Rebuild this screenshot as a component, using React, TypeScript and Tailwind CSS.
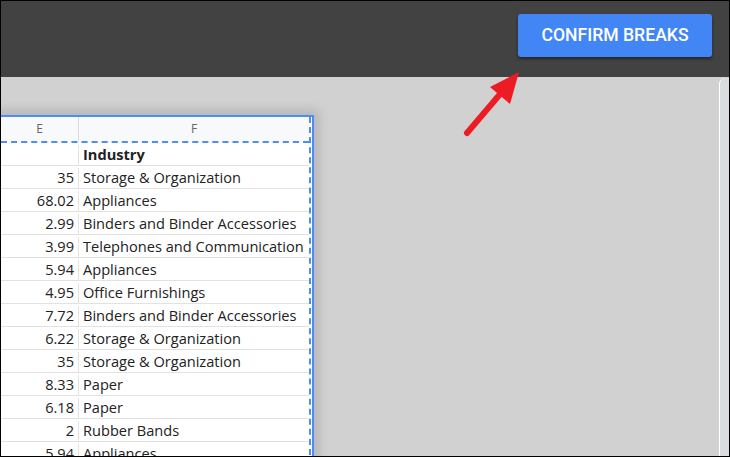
import React from 'react'

const rows: [string, string][] = [
  ['35', 'Storage & Organization'],
  ['68.02', 'Appliances'],
  ['2.99', 'Binders and Binder Accessories'],
  ['3.99', 'Telephones and Communication'],
  ['5.94', 'Appliances'],
  ['4.95', 'Office Furnishings'],
  ['7.72', 'Binders and Binder Accessories'],
  ['6.22', 'Storage & Organization'],
  ['35', 'Storage & Organization'],
  ['8.33', 'Paper'],
  ['6.18', 'Paper'],
  ['2', 'Rubber Bands'],
  ['5.94', 'Appliances'],
]

export default function App() {
  return (
    <div className="relative w-[730px] h-[457px] overflow-hidden border border-black bg-[#d1d1d1] flex flex-col">
      {/* top toolbar */}
      <div className="h-[76px] shrink-0 bg-[#424242] flex items-start justify-end pr-[17px] pt-[13px]">
        <button
          className="w-[194px] h-[43px] rounded-[3px] bg-[#4285f4] text-white text-[17.6px] font-medium shadow-[0_2px_3px_rgba(0,0,0,0.45)]"
          style={{ fontFamily: 'Roboto, "Liberation Sans", sans-serif' }}
        >
          CONFIRM BREAKS
        </button>
      </div>

      <div className="flex-1 flex min-h-0">
        {/* sheet preview */}
        <div className="flex-1 min-w-0 pt-[38px] overflow-hidden">
          <div
            className="w-[313px] bg-white border-t-2 border-r-2 border-[#4d8ef3] shadow-[0_0_10px_5px_rgba(0,0,0,0.13)] text-[#222]"
            style={{ fontFamily: '"Open Sans", "Liberation Sans", sans-serif' }}
          >
            <div className="mr-px border-r-2 border-dashed border-[#4d8ef3]">
              <div className="flex h-[26px] bg-[#f8f9fa] border-b-2 border-dashed border-[#4d8ef3] text-[12px] text-[#666]">
                <div className="w-[78px] border-r border-[#dadada] flex items-center justify-center">E</div>
                <div className="flex-1 flex items-center justify-center">F</div>
              </div>
              <div className="flex h-[23px] border-b border-[#e2e2e2] text-[14.6px] pt-[2px]">
                <div className="w-[78px] border-r border-[#e2e2e2]"></div>
                <div className="flex-1 pl-[4px] flex items-center font-bold whitespace-nowrap">Industry</div>
              </div>
              {rows.map(([n, t], i) => (
                <div key={i} className="flex h-[23px] border-b border-[#e2e2e2] text-[14.6px] pt-[2px]">
                  <div className="w-[78px] border-r border-[#e2e2e2] pr-[4px] flex items-center justify-end">{n}</div>
                  <div className="flex-1 pl-[4px] flex items-center whitespace-nowrap overflow-hidden">{t}</div>
                </div>
              ))}
            </div>
          </div>
        </div>
        {/* right side panel edge */}
        <div className="w-[10px] shrink-0 mt-px rounded-tl-[6px] bg-[#dadce0] border-l border-white"></div>
      </div>

      {/* annotation arrow */}
      <svg className="absolute left-0 top-0 pointer-events-none" width="730" height="457">
        <line x1="466" y1="132" x2="500" y2="92" stroke="#ed1c24" strokeWidth="6" strokeLinecap="round" />
        <polygon points="518,71 489,86 509,103" fill="#ed1c24" />
      </svg>
    </div>
  )
}
